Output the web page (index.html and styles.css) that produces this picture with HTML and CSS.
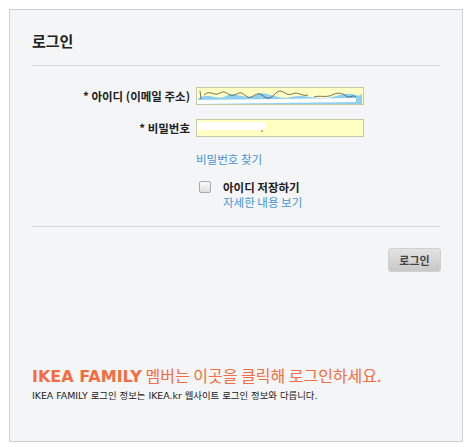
FILE: index.html
```html
<html>

<head>
    <link rel="stylesheet" href="styles.css">
</head>

<body>
    <div class="panel">
        <h1>로그인</h1>

        <form class="login">
            <div class="row">
                <label>* 아이디 (이메일 주소)</label>
                <div class="field">
                    <svg width="168" height="18" viewBox="0 0 168 18">
                        <path d="M2 12 C10 4, 20 14, 30 9 S50 14, 60 8 S80 14, 95 10 S120 15, 140 9 S160 12, 166 7 L166 17 L2 17 Z" fill="#8fd0f0"/>
                        <path d="M4 4 L5 12 M8 8 C14 2, 18 10, 24 6 S32 10, 38 8 S44 4, 50 9 S60 3, 66 8 S74 12, 80 6 S90 10, 96 7 S106 10, 112 8 M118 10 C124 8, 130 11, 136 8 S146 6, 150 9 S156 7, 160 10" fill="none" stroke="#3a3a3a" stroke-width="0.7"/>
                        <path d="M0 15 L160 13" stroke="#fff" stroke-width="4"/>
                    </svg>
                </div>
            </div>
            <div class="row pass-row">
                <label>* 비밀번호</label>
                <div class="field">
                    <svg width="168" height="18" viewBox="0 0 168 18">
                        <path d="M2 7 L66 7" stroke="#fff" stroke-width="8" stroke-linecap="round"/>
                        <circle cx="66" cy="12" r="0.8" fill="#555"/>
                    </svg>
                </div>
            </div>
            <div class="row find-row">
                <span></span>
                <a href="#" class="find">비밀번호 찾기</a>
            </div>
            <div class="row">
                <span></span>
                <div class="remember">
                    <span class="check"></span>
                    <div>
                        <div class="remember-label">아이디 저장하기</div>
                        <a href="#">자세한 내용 보기</a>
                    </div>
                </div>
            </div>
        </form>

        <div class="actions">
            <button type="button">로그인</button>
        </div>

        <div class="family">
            <p class="family-title"><b>IKEA FAMILY</b> 멤버는 이곳을 클릭해 로그인하세요.</p>
            <p class="family-note">IKEA FAMILY 로그인 정보는 IKEA.kr 웹사이트 로그인 정보와 다릅니다.</p>
        </div>
    </div>
</body>

</html>
```

FILE: styles.css
```css
body {
    margin: 0;
    padding: 9px 7px 5px 9px;
    background-color: #fff;
    font-family: "Noto Sans CJK KR", "DejaVu Sans", sans-serif;
    color: #222;
}

a:link,
a:visited {
    color: #4a94d4;
    text-decoration: none;
}

.panel {
    box-sizing: border-box;
    width: 454px;
    height: 433px;
    border: 1px solid #cfcfcf;
    background-color: #f4f5f7;
    padding: 0 22px;
}

h1 {
    margin: 0;
    padding: 17px 0 10px;
    font-size: 15px;
    font-weight: bold;
    line-height: 28px;
    border-bottom: 1px solid #d4d4d4;
}

.login {
    margin: 0;
    padding: 21px 0 16px;
    border-bottom: 1px solid #d4d4d4;
    font-size: 11.5px;
}

.row {
    display: grid;
    grid-template-columns: 158px 168px;
    column-gap: 6px;
    align-items: center;
    margin-bottom: 14px;
}

.row label {
    text-align: right;
    font-weight: bold;
    color: #222;
}

.field {
    box-sizing: border-box;
    height: 18px;
    background-color: #ffffc4;
    border: 1px solid #c9c9a8;
    overflow: hidden;
}

.field svg {
    display: block;
    margin: -1px;
}

.find {
    line-height: 15px;
    margin-top: -1px;
}

.pass-row {
    margin-bottom: 16px;
}

.find-row {
    margin-bottom: 13px;
}

.row:last-child {
    margin-bottom: 0;
}

.remember {
    display: flex;
    align-items: flex-start;
    padding-left: 3px;
}

.check {
    box-sizing: border-box;
    width: 12px;
    height: 12px;
    margin-top: 1px;
    margin-right: 12px;
    border: 1px solid #a9a9a9;
    border-radius: 2px;
    background: linear-gradient(#fafafa, #dedede);
}

.remember-label {
    font-weight: bold;
    line-height: 15px;
}

.remember a {
    line-height: 15px;
    display: block;
}

.actions {
    display: flex;
    justify-content: flex-end;
    padding-top: 21px;
}

button {
    width: 53px;
    height: 24px;
    margin-right: -1px;
    border: 1px solid #d0d0d0;
    border-radius: 3px;
    background: linear-gradient(#e3e3e3, #c8c8c8);
    font-family: "Noto Sans CJK KR", sans-serif;
    font-size: 11px;
    font-weight: bold;
    color: #444;
    padding: 0;
}

.family {
    padding-top: 93px;
}

.family p {
    margin: 0;
}

.family-title {
    font-size: 16px;
    line-height: 20px;
    color: #f26e40;
}

.family-title b {
    font-family: "DejaVu Sans", sans-serif;
    font-weight: bold;
    font-size: 16px;
}

.family-note {
    font-size: 9.4px;
    line-height: 14px;
    margin-top: 2px !important;
    font-family: "DejaVu Sans", "Noto Sans CJK KR", sans-serif;
    color: #222;
}
```
